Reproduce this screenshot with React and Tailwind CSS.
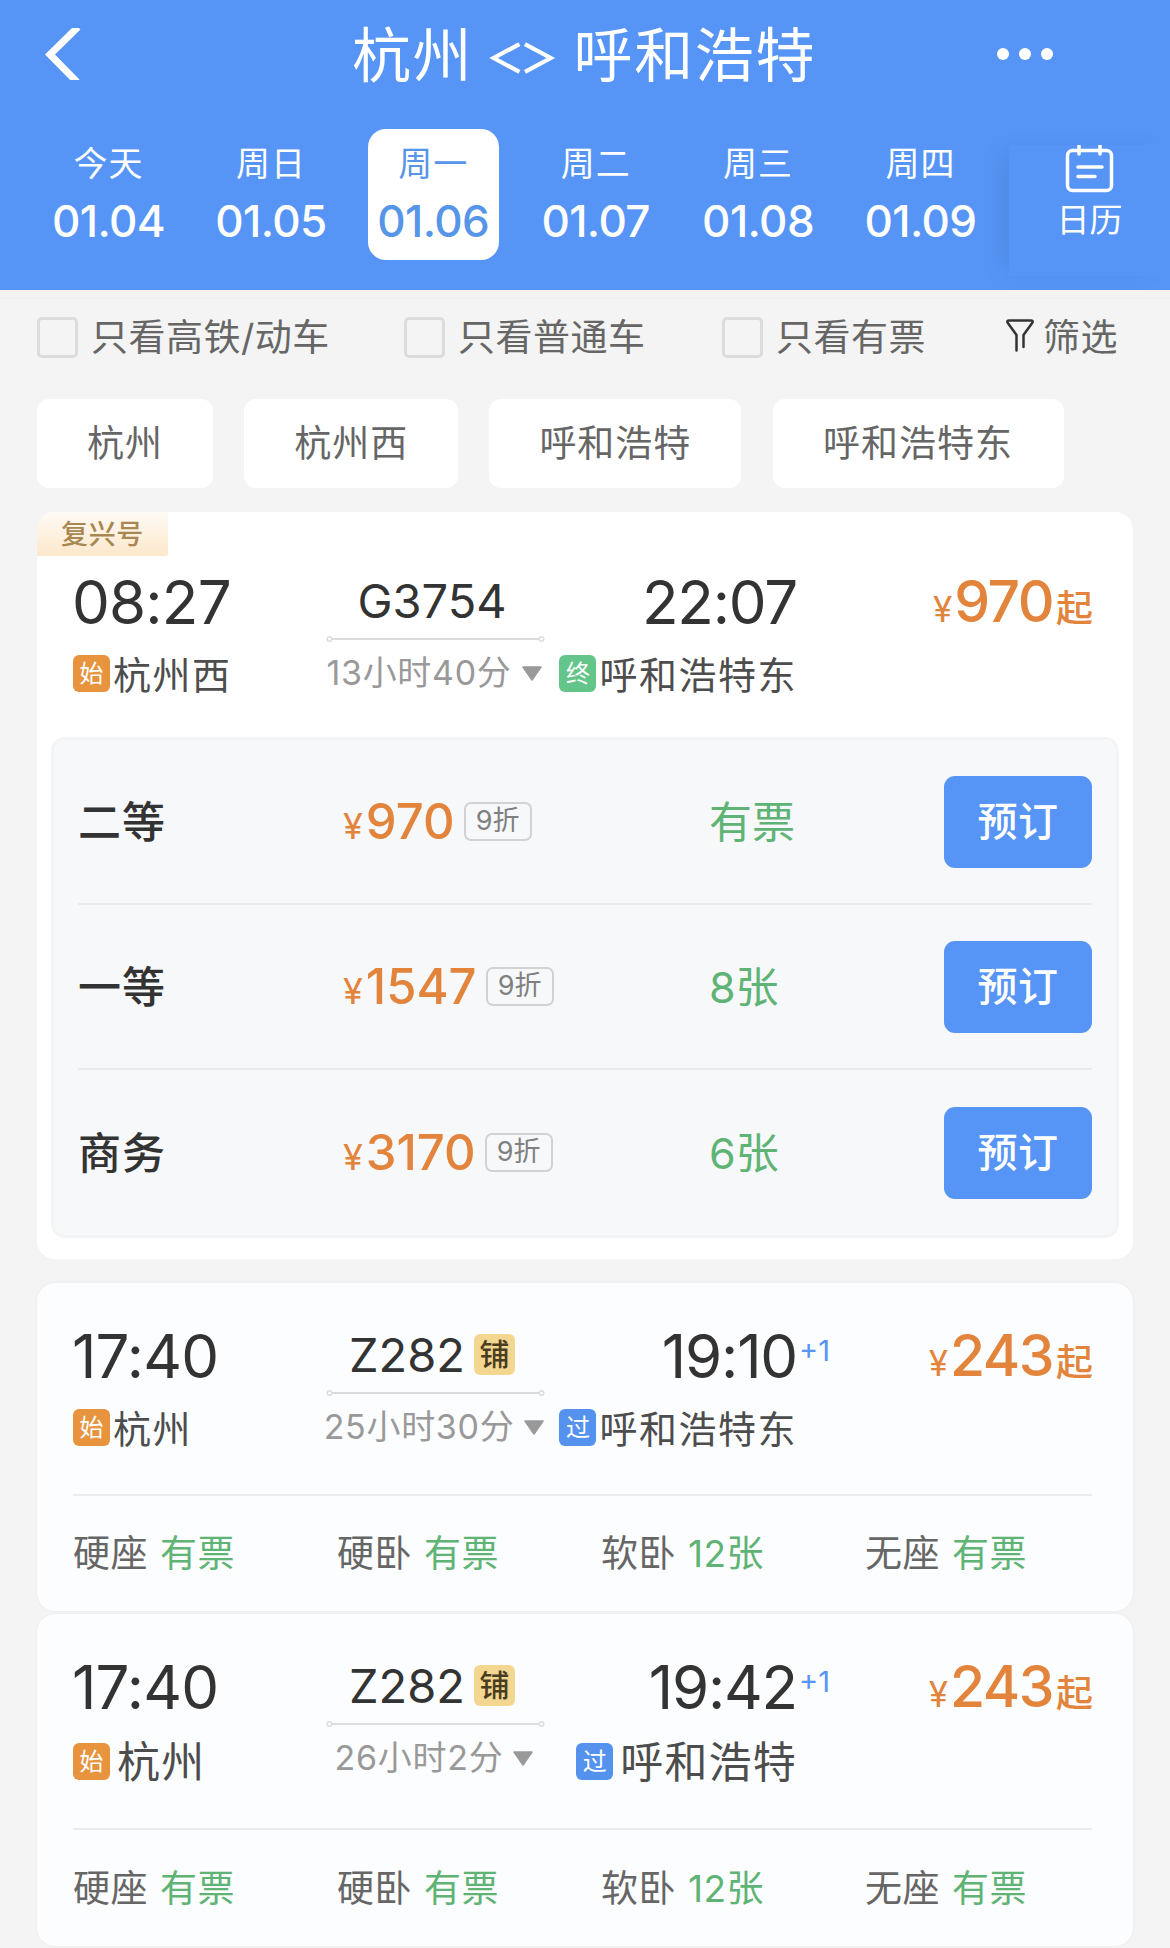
import React, { useState } from 'react';
import clsx from 'clsx';

const days = [
  { label: '今天', date: '01.04' },
  { label: '周日', date: '01.05' },
  { label: '周一', date: '01.06' },
  { label: '周二', date: '01.07' },
  { label: '周三', date: '01.08' },
  { label: '周四', date: '01.09' },
];

const filters = [
  { label: '只看高铁/动车', width: 'w-[367px]' },
  { label: '只看普通车', width: 'w-[318px]' },
  { label: '只看有票', width: 'w-[284px]' },
];

const stations = [
  { name: '杭州', width: 'w-[176px]' },
  { name: '杭州西', width: 'w-[214px]' },
  { name: '呼和浩特', width: 'w-[252px]' },
  { name: '呼和浩特东', width: 'w-[291px]' },
];

const classes = [
  { name: '二等', price: '970', left: '有票' },
  { name: '一等', price: '1547', left: '8张' },
  { name: '商务', price: '3170', left: '6张' },
];

const seats = [
  { name: '硬座', left: '有票' },
  { name: '硬卧', left: '有票' },
  { name: '软卧', left: '12张' },
  { name: '无座', left: '有票' },
];

const tagColors = {
  始: 'bg-[#e8943f]',
  终: 'bg-[#64c58a]',
  过: 'bg-[#5492ee]',
};

const Tag = ({ text }) => (
  <span
    className={clsx(
      'flex h-[37px] w-[37px] shrink-0 items-center justify-center rounded-[6px] pt-px text-[24px] leading-none text-white',
      tagColors[text]
    )}
  >
    {text}
  </span>
);

const Station = ({ tag, name, large }) => (
  <div className={clsx('flex h-[44px] items-center whitespace-nowrap', large ? 'mt-[22px]' : 'mt-[19px]')}>
    <Tag text={tag} />
    <span
      className={clsx(
        'pt-[3px] leading-none text-[#4d4d4d]',
        large ? 'ml-[7px] text-[43px] tracking-[1.2px]' : 'ml-[3px] text-[38px] tracking-[1.5px]'
      )}
    >
      {name}
    </span>
  </div>
);

const TrainSummary = ({ train }) => (
  <div className="grid grid-cols-[254px_217px_253px_1fr] text-[#333]">
    {/* Departure */}
    <div>
      <div className="-ml-px flex h-[60px] items-center text-[60px] leading-none tracking-[-0.8px]">
        {train.depart}
      </div>
      <Station tag="始" name={train.from} large={train.large} />
    </div>

    {/* Train number and duration */}
    <div className="flex flex-col items-center">
      <div className="flex h-[60px] items-center pr-[7px] pb-[4px] whitespace-nowrap text-[47px] leading-none">
        {train.number}
        {train.sleeper && (
          <span className="ml-[9px] flex h-[41px] w-[41px] items-center justify-center rounded-[6px] bg-[#f3d791] text-[30px] font-medium text-[#4a3d1f]">
            铺
          </span>
        )}
      </div>
      <svg className="mt-[3px] block" width="219" height="8" viewBox="0 0 219 8" fill="none" stroke="#dcdcdc">
        <path d="M6 4H213" strokeWidth="2" />
        <circle cx="3.5" cy="4" r="2.3" strokeWidth="1.5" />
        <circle cx="215.5" cy="4" r="2.3" strokeWidth="1.5" />
      </svg>
      <div className="mt-[8px] flex h-[44px] items-center pr-[2px] whitespace-nowrap text-[34px] leading-none tracking-[0.7px] text-[#999]">
        {train.duration}
        <svg className="ml-[9px]" width="22" height="15" viewBox="0 0 22 15">
          <path d="M2 1H20L11 14Z" fill="#999" stroke="#999" strokeWidth="1.5" strokeLinejoin="round" />
        </svg>
      </div>
    </div>

    {/* Arrival */}
    <div className="flex flex-col items-end">
      <div className="relative flex h-[60px] items-center text-[60px] leading-none tracking-[-1.2px]">
        {train.arrive}
        {train.nextDay && (
          <span className="absolute top-[10px] left-full ml-[2px] text-[29px] leading-none tracking-normal text-[#5695f6]">
            +1
          </span>
        )}
      </div>
      <Station tag={train.endTag} name={train.to} large={train.large} />
    </div>

    {/* Lowest price */}
    <div className="-mr-px flex h-[60px] items-baseline justify-end pt-[2px] text-[#e2843c]">
      <span className="text-[35px] leading-none">¥</span>
      <span className="ml-[2px] text-[57px] leading-[56px] font-medium tracking-[-1.5px]">{train.price}</span>
      <span className="ml-[3px] text-[37px] leading-none font-medium">起</span>
    </div>
  </div>
);

const SeatList = () => (
  <div className="grid grid-cols-[264px_264px_264px_1fr] text-[37px] leading-none tracking-[0.5px]">
    {seats.map((seat) => (
      <div key={seat.name} className="flex gap-[12px] whitespace-nowrap">
        <span className="text-[#666]">{seat.name}</span>
        <span className="text-[#5fb475]">{seat.left}</span>
      </div>
    ))}
  </div>
);

const App = () => {
  const [selected, setSelected] = useState('01.06');

  return (
    <div className="h-[1948px] w-[1170px] overflow-hidden bg-[#f4f4f4] font-['Inter','Noto_Sans_CJK_SC',sans-serif]">
      {/* Header */}
      <header className="h-[290px] bg-[#5695f6] text-white">
        <div className="flex h-[107px] items-center">
          <svg className="ml-[44px]" width="38" height="52" viewBox="0 0 38 52" fill="none" stroke="white" strokeWidth="7">
            <path d="M34 -1L6 26.5L33 54" />
          </svg>
          <h1 className="ml-[270px] flex w-[464px] items-center pt-[4px] whitespace-nowrap text-[59px] leading-none tracking-[1.6px]">
            杭州
            <svg className="mt-[4px] ml-[16px]" width="72" height="36" viewBox="0 0 72 36" fill="none" stroke="white" strokeWidth="4.5">
              <path d="M33 3L5 18L33 33M39 3L67 18L39 33" />
            </svg>
            <span className="ml-[18px]">呼和浩特</span>
          </h1>
          <div className="ml-[181px] flex gap-[10px]">
            <span className="h-[12px] w-[12px] rounded-full bg-white" />
            <span className="h-[12px] w-[12px] rounded-full bg-white" />
            <span className="h-[12px] w-[12px] rounded-full bg-white" />
          </div>
        </div>

        <div className="mt-[22px] flex">
          <div className="flex w-[1009px] gap-[31.4px] pl-[43px]">
            {days.map((day) => (
              <button
                key={day.date}
                onClick={() => setSelected(day.date)}
                className={clsx(
                  'flex h-[131px] w-[131px] flex-col items-center rounded-[18px] pt-[18px]',
                  selected === day.date && 'bg-white text-[#5695e8]'
                )}
              >
                <span className="text-[34px] leading-[34px] tracking-[1px]">{day.label}</span>
                <span className="mt-[18px] text-[44px] leading-[44px] font-medium tracking-[-0.6px]">{day.date}</span>
              </button>
            ))}
          </div>
          <div className="mt-[16px] flex h-[131px] w-[161px] flex-col items-center bg-[#5695f6] shadow-[-12px_0_20px_-8px_rgba(50,90,150,0.22)]">
            <svg width="49" height="48" viewBox="0 0 49 48" fill="none" stroke="white" strokeWidth="3.5" strokeLinecap="round">
              <rect x="2.5" y="5.5" width="44" height="40" rx="5" />
              <path d="M14 1V9M35 1V9M13 22H37M13 31.5H30" />
            </svg>
            <span className="mt-[10px] text-[33px] leading-[34px]">日历</span>
          </div>
        </div>
      </header>
      <div className="h-[9px] border-b border-[#ecedeb] bg-[#f4f3f2]" />

      {/* Filters */}
      <div className="flex h-[77px] items-center pl-[37px] text-[37px] leading-none tracking-[0.5px] text-[#666]">
        {filters.map((filter) => (
          <label key={filter.label} className={clsx('flex items-center whitespace-nowrap', filter.width)}>
            <span className="mr-[13px] h-[41px] w-[41px] rounded-[5px] border-[3px] border-[#dcdcdc]" />
            <span className="mt-[-1px]">{filter.label}</span>
          </label>
        ))}
        <div className="flex items-center whitespace-nowrap">
          <svg className="mt-[-4px] mr-[9px]" width="28" height="33" viewBox="0 0 28 33" fill="none" stroke="#333" strokeWidth="2.5" strokeLinecap="round" strokeLinejoin="round">
            <path d="M10.5 31.5V16L1.5 3.5Q0.8 1.5 3 1.5H25Q27.2 1.5 26.5 3.5L17.5 16V28" />
          </svg>
          <span className="mt-[-1px]">筛选</span>
        </div>
      </div>

      {/* Stations */}
      <div className="mt-[23px] flex gap-[31.2px] px-[37px]">
        {stations.map((station) => (
          <button
            key={station.name}
            className={clsx(
              'h-[89px] rounded-[12px] bg-white text-[37px] leading-none tracking-[1px] whitespace-nowrap text-[#666]',
              station.width
            )}
          >
            {station.name}
          </button>
        ))}
      </div>

      {/* Expanded train */}
      <section className="mx-[37px] mt-[24px] h-[747px] overflow-hidden rounded-[18px] bg-white">
        <div className="flex h-[44px] w-[131px] items-center justify-center rounded-br-[3px] bg-gradient-to-b from-[#fefaf5] to-[#fce8cb] text-[27px] leading-none font-medium tracking-[0.7px] text-[#a98751]">
          复兴号
        </div>
        <div className="mt-[16px] pr-[41px] pl-[36px]">
          <TrainSummary
            train={{
              depart: '08:27',
              from: '杭州西',
              number: 'G3754',
              duration: '13小时40分',
              arrive: '22:07',
              to: '呼和浩特东',
              endTag: '终',
              price: '970',
            }}
          />
        </div>
        <div className="mx-[14px] mt-[42px] h-[501px] rounded-[14px] border-[3px] border-[#f3f4f5] bg-[#f7f8fa] px-[24px]">
          {classes.map((item) => (
            <div
              key={item.name}
              className="flex h-[165px] items-center border-b-2 border-[#ebebec] last:border-b-0"
            >
              <span className="w-[265px] pt-[2px] text-[43px] leading-none font-medium tracking-[1px] text-[#333]">{item.name}</span>
              <div className="flex w-[366px] items-center">
                <div className="flex items-baseline text-[#e2843c]">
                  <span className="text-[36px] leading-none">¥</span>
                  <span className="ml-[3px] text-[49px] leading-none font-medium">{item.price}</span>
                </div>
                <span className="ml-[9px] flex h-[39px] w-[68px] items-center justify-center rounded-[7px] border-2 border-[#d2d2d3] pb-[2px] text-[27px] leading-none text-[#808080]">
                  9折
                </span>
              </div>
              <span className="w-[235px] pt-[2px] text-[43px] leading-none text-[#5fb475]">{item.left}</span>
              <button className="h-[92px] w-[148px] rounded-[11px] bg-[#5695f6] text-[40px] leading-none font-medium tracking-[0.5px] text-white">
                预订
              </button>
            </div>
          ))}
        </div>
      </section>

      {/* Collapsed trains */}
      <section className="mx-[37px] mt-[24px] h-[328px] rounded-[18px] bg-[#fcfdfe] pt-[43px] pr-[41px] pl-[36px] shadow-[0_0_2px_rgba(0,0,0,0.08)]">
        <TrainSummary
          train={{
            depart: '17:40',
            from: '杭州',
            number: 'Z282',
            sleeper: true,
            duration: '25小时30分',
            arrive: '19:10',
            nextDay: true,
            to: '呼和浩特东',
            endTag: '过',
            price: '243',
          }}
        />
        <div className="mt-[45px] mb-[39px] h-[2px] bg-[#ebeced]" />
        <SeatList />
      </section>

      <section className="mx-[37px] mt-[3px] h-[332px] rounded-[18px] bg-[#fcfdfe] pt-[43px] pr-[41px] pl-[36px] shadow-[0_0_2px_rgba(0,0,0,0.08)]">
        <TrainSummary
          train={{
            depart: '17:40',
            from: '杭州',
            number: 'Z282',
            sleeper: true,
            duration: '26小时2分',
            arrive: '19:42',
            nextDay: true,
            to: '呼和浩特',
            endTag: '过',
            price: '243',
            large: true,
          }}
        />
        <div className="mt-[45px] mb-[40px] h-[2px] bg-[#ebeced]" />
        <SeatList />
      </section>
    </div>
  );
};

export default App;
